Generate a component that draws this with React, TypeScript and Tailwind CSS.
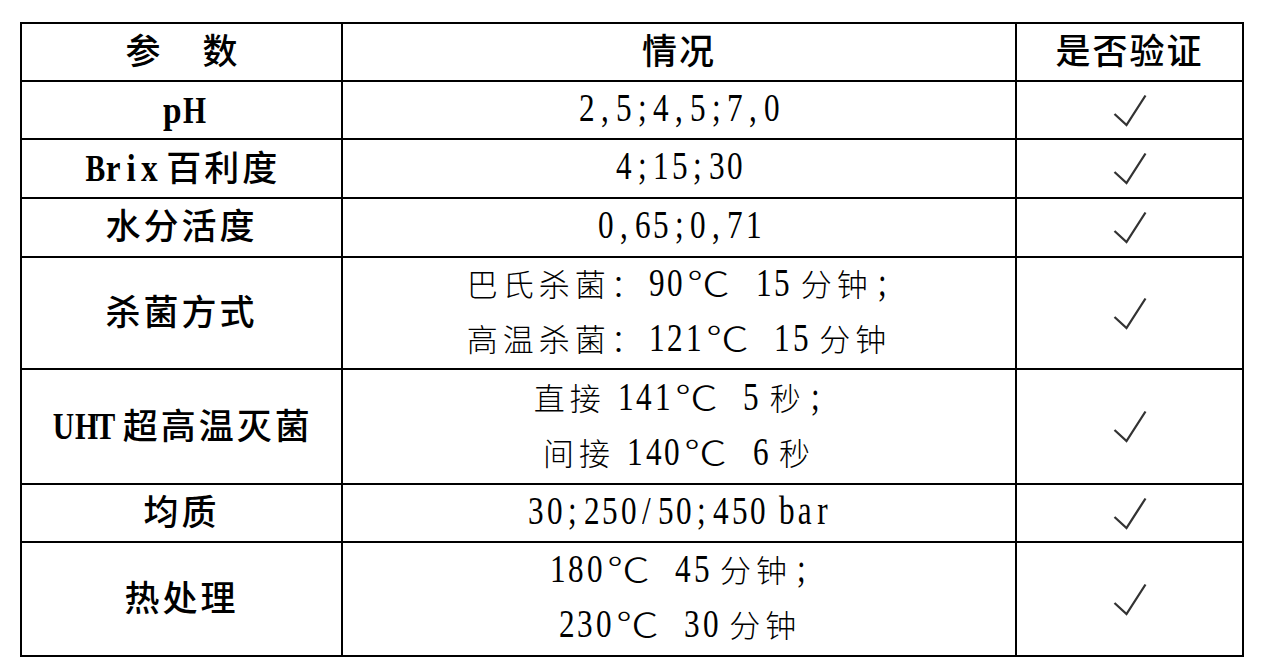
import React from "react";

type Row = { name: string; lines: string[]; h: string };

const rows: Row[] = [
  { name: "pH", lines: ["2,5;4,5;7,0"], h: "h-[58px]" },
  { name: "Brix 百利度", lines: ["4;15;30"], h: "h-[59px]" },
  { name: "水分活度", lines: ["0,65;0,71"], h: "h-[59px]" },
  { name: "杀菌方式", lines: ["巴氏杀菌：90℃  15 分钟;", "高温杀菌：121℃  15 分钟"], h: "h-[112px]" },
  { name: "UHT 超高温灭菌", lines: ["直接 141℃  5 秒;", "间接 140℃  6 秒"], h: "h-[115px]" },
  { name: "均质", lines: ["30;250/50;450 bar"], h: "h-[58px]" },
  { name: "热处理", lines: ["180℃  45 分钟;", "230℃  30 分钟"], h: "h-[114px]" },
];

// ascii chars sit in half-width cells, like the original document's font
function Cells({ text, bold }: { text: string; bold?: boolean }) {
  return (
    <>
      {Array.from(text).map((c, i) => {
        if (c === " ") return <span key={i} className={bold ? "inline-block w-[8px]" : "inline-block w-[10px]"} />;
        if (c === "℃")
          return (
            <span key={i} className="inline-block w-[50px] text-center font-['Noto_Sans_CJK_SC',sans-serif] text-[33px] leading-none">
              <span className="inline-block scale-x-[1.3]">{c}</span>
            </span>
          );
        if (c.charCodeAt(0) >= 128)
          return (
            <span key={i} className={bold ? "tracking-[3px]" : "tracking-[5px]"}>
              {c}
            </span>
          );
        if (bold && c >= "A" && c <= "Z")
          return (
            <span key={i} className="inline-block w-[21.5px] text-center text-[37px] leading-none font-bold">
              <span className="inline-block scale-x-[0.8]">{c}</span>
            </span>
          );
        if (bold)
          return (
            <span key={i} className="inline-block w-[18px] text-center text-[37px] leading-none font-bold">
              <span className="inline-block scale-x-[0.9]">{c}</span>
            </span>
          );
        return (
          <span key={i} className="inline-block w-[18.5px] text-center text-[39px] leading-none">
            <span className="inline-block scale-x-[0.8]">{c}</span>
          </span>
        );
      })}
    </>
  );
}

function Check() {
  return (
    <svg width="34" height="33" viewBox="0 0 34 33" className="mx-auto block">
      <polyline points="1.5,20 13.5,31 32.5,1.5" fill="none" stroke="#333" strokeWidth="2.3" />
    </svg>
  );
}

export default function App() {
  return (
    <div className="w-[1262px] h-[672px] bg-white pt-[22px] pl-[20px] font-['Liberation_Serif','Noto_Sans_CJK_SC',serif] text-black">
      <table className="border-collapse table-fixed w-[1222px]">
        <colgroup>
          <col className="w-[321px]" />
          <col className="w-[674px]" />
          <col className="w-[227px]" />
        </colgroup>
        <thead>
          <tr className="h-[58px]">
            <th className="border-2 border-black p-0 text-[35px] leading-none font-medium">
              参<span className="inline-block w-[42px]" />数
            </th>
            <th className="border-2 border-black p-0 text-[35px] leading-none font-medium tracking-[2px]">情况</th>
            <th className="border-2 border-black p-0 text-[35px] leading-none font-medium tracking-[2px]">是否验证</th>
          </tr>
        </thead>
        <tbody>
          {rows.map((r) => (
            <tr key={r.name} className={r.h}>
              <td className="border-2 border-black p-0 text-center text-[35px] leading-none font-medium">
                <Cells text={r.name} bold />
              </td>
              <td className="border-2 border-black p-0 text-center text-[31px] leading-[55px] font-light">
                {r.lines.map((l) => (
                  <div key={l}>
                    <Cells text={l} />
                  </div>
                ))}
              </td>
              <td className="border-2 border-black p-0">
                <Check />
              </td>
            </tr>
          ))}
        </tbody>
      </table>
    </div>
  );
}
